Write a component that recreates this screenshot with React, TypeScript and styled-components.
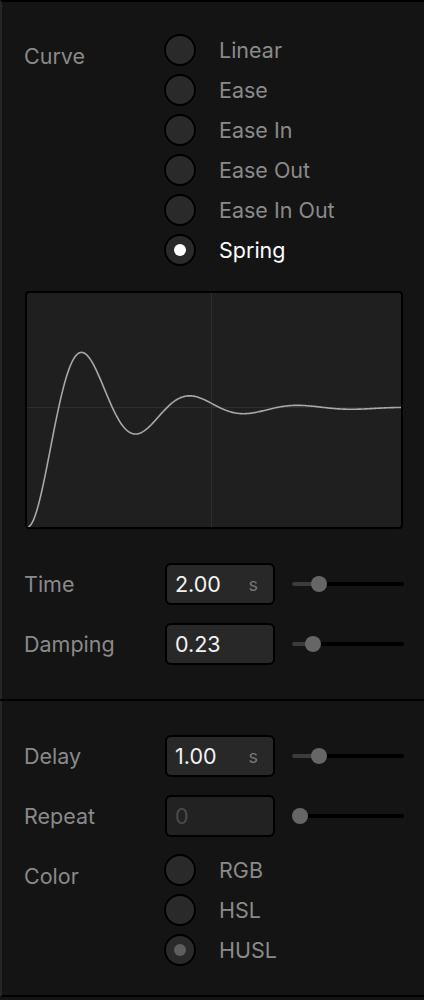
import React from "react";
import styled, { createGlobalStyle } from "styled-components";

const Global = createGlobalStyle`
  html, body { margin: 0; padding: 0; background: #141414; }
  * { box-sizing: border-box; }
  body { font-family: Inter, "Open Sans", "Liberation Sans", sans-serif; -webkit-font-smoothing: antialiased; }
`;

const Panel = styled.div`
  width: 424px;
  height: 997px;
  background: #141414;
  border-top: 2px solid #000;
  border-left: 2px solid #262626;
  border-bottom: 2px solid #000;
  display: flex;
  flex-direction: column;
`;

const Section = styled.section<{ $pt: number; $pb: number }>`
  padding: ${(p) => p.$pt}px 20px ${(p) => p.$pb}px 22px;
  display: flex;
  flex-direction: column;
`;

const Divider = styled.div`
  height: 2px;
  background: #000;
  margin-left: -2px;
`;

const Row = styled.div<{ $mt?: number }>`
  display: grid;
  grid-template-columns: 141px 110px 1fr;
  align-items: center;
  margin-top: ${(p) => p.$mt ?? 0}px;
`;

const GroupRow = styled.div<{ $mt?: number }>`
  display: grid;
  grid-template-columns: 140px 1fr;
  align-items: start;
  margin-top: ${(p) => p.$mt ?? 0}px;
`;

const Label = styled.div<{ $offset?: number }>`
  color: #8a8a8a;
  font-size: 21.5px;
  line-height: 26px;
  padding-top: ${(p) => p.$offset ?? 0}px;
`;

const Options = styled.div`
  display: flex;
  flex-direction: column;
`;

const Option = styled.div`
  height: 40px;
  display: flex;
  align-items: center;
  gap: 23px;
`;

const Circle = styled.div<{ $dot?: "on" | "dim" }>`
  width: 32px;
  height: 32px;
  flex: none;
  border-radius: 50%;
  background: #2a2a2a;
  border: 2px solid #000;
  display: flex;
  align-items: center;
  justify-content: center;
  &::after {
    content: "";
    display: ${(p) => (p.$dot ? "block" : "none")};
    width: 12px;
    height: 12px;
    border-radius: 50%;
    background: ${(p) => (p.$dot === "on" ? "#ffffff" : "#5e5e5e")};
  }
`;

const OptionText = styled.span<{ $active?: boolean }>`
  font-size: 21.5px;
  line-height: 26px;
  color: ${(p) => (p.$active ? "#ffffff" : "#8a8a8a")};
`;

const Graph = styled.div`
  margin-top: 21px;
  margin-left: 1px;
  width: 378px;
  height: 238px;
  border: 2px solid #000;
  border-radius: 4px;
  background: #1f1f1f;
  overflow: hidden;
  svg { display: block; }
`;

const Field = styled.div<{ $disabled?: boolean }>`
  height: 42px;
  width: 110px;
  border: 2px solid #000;
  border-radius: 6px;
  background: ${(p) => (p.$disabled ? "#222222" : "#282828")};
  display: flex;
  align-items: center;
  justify-content: space-between;
  padding: 0 15px 0 8px;
`;

const Value = styled.span<{ $disabled?: boolean }>`
  font-size: 21.5px;
  line-height: 26px;
  color: ${(p) => (p.$disabled ? "#4a4a4a" : "#f2f2f2")};
`;

const Unit = styled.span`
  font-size: 18px;
  color: #767676;
`;

const Slider = styled.div`
  margin-left: 17px;
  width: 112px;
  height: 16px;
  position: relative;
  display: flex;
  align-items: center;
`;

const Track = styled.div`
  width: 100%;
  height: 4px;
  border-radius: 2px;
  background: #000;
  overflow: hidden;
`;

const Fill = styled.div`
  height: 100%;
  background: #3c3c3c;
`;

const Thumb = styled.div`
  position: absolute;
  top: 0;
  width: 16px;
  height: 16px;
  border-radius: 50%;
  background: #666666;
`;

function RangeSlider({ offset }: { offset: number }) {
  return (
    <Slider>
      <Track>
        <Fill style={{ width: offset + 8 }} />
      </Track>
      <Thumb style={{ left: offset }} />
    </Slider>
  );
}

function SpringCurve() {
  const W = 374;
  const H = 234;
  const y0 = 234;
  const eq = 115;
  const amp = y0 - eq;
  const half = 54;
  const w = Math.PI / half;
  const a = (0.76 * w) / Math.PI;
  const pts: string[] = [];
  for (let x = 0; x <= W; x += 1) {
    const v = 1 - Math.exp(-a * x) * (Math.cos(w * x) + (a / w) * Math.sin(w * x));
    const y = y0 - v * amp;
    pts.push(`${x === 0 ? "M" : "L"}${(x + 0.5).toFixed(1)} ${y.toFixed(2)}`);
  }
  return (
    <svg width={W} height={H} viewBox={`0 0 ${W} ${H}`}>
      <line x1={184.5} y1={0} x2={184.5} y2={H} stroke="#2e2e2e" strokeWidth={1} />
      <line x1={0} y1={114.5} x2={W} y2={114.5} stroke="#2e2e2e" strokeWidth={1} />
      <path d={pts.join(" ")} fill="none" stroke="#a8a8a8" strokeWidth={1.6} />
    </svg>
  );
}

const curves = ["Linear", "Ease", "Ease In", "Ease Out", "Ease In Out", "Spring"];
const colors = ["RGB", "HSL", "HUSL"];

export default function App() {
  return (
    <>
      <Global />
      <Panel>
        <Section $pt={28} $pb={34}>
          <GroupRow>
            <Label $offset={13}>Curve</Label>
            <Options>
              {curves.map((c) => (
                <Option key={c}>
                  <Circle $dot={c === "Spring" ? "on" : undefined} />
                  <OptionText $active={c === "Spring"}>{c}</OptionText>
                </Option>
              ))}
            </Options>
          </GroupRow>
          <Graph>
            <SpringCurve />
          </Graph>
          <Row $mt={34}>
            <Label>Time</Label>
            <Field>
              <Value>2.00</Value>
              <Unit>s</Unit>
            </Field>
            <RangeSlider offset={19} />
          </Row>
          <Row $mt={18}>
            <Label>Damping</Label>
            <Field>
              <Value>0.23</Value>
            </Field>
            <RangeSlider offset={13} />
          </Row>
        </Section>
        <Divider />
        <Section $pt={34} $pb={0}>
          <Row>
            <Label>Delay</Label>
            <Field>
              <Value>1.00</Value>
              <Unit>s</Unit>
            </Field>
            <RangeSlider offset={19} />
          </Row>
          <Row $mt={18}>
            <Label>Repeat</Label>
            <Field $disabled>
              <Value $disabled>0</Value>
            </Field>
            <RangeSlider offset={0} />
          </Row>
          <GroupRow $mt={13}>
            <Label $offset={13}>Color</Label>
            <Options>
              {colors.map((c) => (
                <Option key={c}>
                  <Circle $dot={c === "HUSL" ? "dim" : undefined} />
                  <OptionText>{c}</OptionText>
                </Option>
              ))}
            </Options>
          </GroupRow>
        </Section>
      </Panel>
    </>
  );
}
